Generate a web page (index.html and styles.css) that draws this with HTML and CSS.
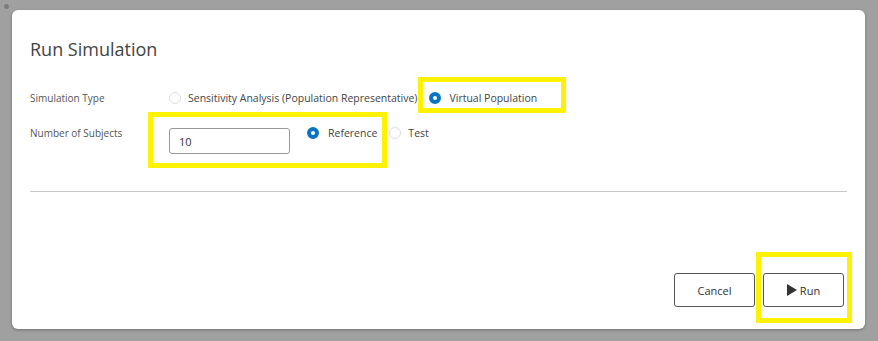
FILE: index.html
```html
<!DOCTYPE html>
<html lang="en">
<head>
  <meta charset="UTF-8"/>
  <title>Run Simulation</title>
  <link rel="stylesheet" href="styles.css">
</head>
<body>
  <span class="dot"></span>

  <div class="dialog">
    <h2 class="title">Run Simulation</h2>

    <div class="form">
      <div class="row row-type">
        <span class="label">Simulation Type</span>
        <label class="opt"><span class="radio"></span>Sensitivity Analysis (Population Representative)</label>
        <label class="opt opt-vp"><span class="radio on"></span>Virtual Population</label>
      </div>
      <div class="row row-subj">
        <span class="label">Number of Subjects</span>
        <input class="num" type="text" value="10">
        <label class="opt opt-ref"><span class="radio on"></span>Reference</label>
        <label class="opt opt-test"><span class="radio"></span>Test</label>
      </div>
    </div>

    <hr class="sep">

    <div class="footer">
      <button class="btn">Cancel</button>
      <button class="btn btn-run">
        <svg width="10" height="12" viewBox="0 0 10 12"><path d="M0 0 L10 6 L0 12 Z" fill="#333"/></svg>
        Run
      </button>
    </div>

    <!-- yellow annotation boxes -->
    <span class="mark mark-vp"></span>
    <span class="mark mark-num"></span>
    <span class="mark mark-run"></span>
  </div>
</body>
</html>
```

FILE: styles.css
```css
* { margin:0; padding:0; box-sizing:border-box; }
html, body {
  width:100%; height:100%; overflow:hidden;
  background:#a0a0a0;
  font-family:'Open Sans','Noto Sans',sans-serif;
  color:#333;
}
body { padding:10px 13px 12px 12px; position:relative; }

.dot {
  position:absolute; top:4px; left:4px;
  width:5px; height:5px; border-radius:50%;
  background:#7c7c7c; filter:blur(0.6px);
}

/* dialog */
.dialog {
  position:relative;
  width:853px; height:319px;
  background:#fff;
  border-radius:6px;
  box-shadow:0 1px 3px rgba(0,0,0,0.3);
  padding:27px 18px 22px 18px;
  display:flex; flex-direction:column;
}
.title {
  font-size:18px; font-weight:400; line-height:24px;
  color:#444;
}

/* form */
.form { margin-top:29px; display:flex; flex-direction:column; gap:19px; }
.row { display:flex; align-items:center; height:16px; }
.row-subj { align-items:flex-start; height:29px; }
.label {
  width:139px; flex:none;
  font-size:10px; line-height:16px; color:#555;
}
.opt {
  display:flex; align-items:center;
  font-size:10.5px; line-height:16px; color:#444;
  white-space:nowrap;
}
.radio {
  width:12px; height:12px; flex:none;
  border:1px solid #ddd; border-radius:50%;
  background:#fff;
  margin-right:7px;
}
.radio.on { border:4px solid #0a74c4; }
.opt-vp { margin-left:12px; }
.opt-vp .radio { margin-right:8px; }
.opt-ref { margin-left:17px; }
.opt-ref .radio { margin-right:9px; }
.opt-test { margin-left:12px; }

.num {
  width:121px; height:26px; margin-top:3px;
  border:1px solid #999; border-radius:3px;
  padding:0 9px;
  font-family:inherit; font-size:11px; color:#333;
  outline:none;
}

.sep {
  border:none; border-top:1px solid #c8c8c8;
  margin-top:37px;
}

/* footer */
.footer {
  margin-top:auto;
  display:flex; justify-content:flex-end; gap:8px;
  padding-right:3px;
}
.btn {
  width:81px; height:34px;
  background:#fff; color:#333;
  border:1px solid #555; border-radius:3px;
  font-family:inherit; font-size:11px;
  display:flex; align-items:center; justify-content:center; gap:3px;
}
.btn-run svg { display:block; }

/* highlight boxes */
.mark {
  position:absolute;
  border:5px solid #fff200;
  pointer-events:none;
}
.mark-vp  { left:406px; top:67px;  width:148px; height:36px; }
.mark-num { left:136px; top:102px; width:239px; height:56px; }
.mark-run { left:744px; top:242px; width:96px;  height:71px; }
```
